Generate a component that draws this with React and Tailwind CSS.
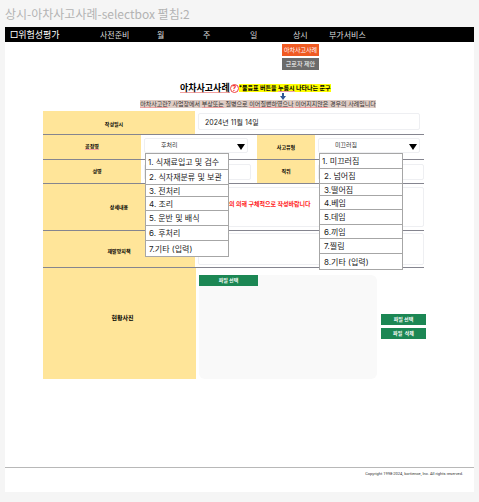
const NAV = [
  { label: "사전준비", col: "col-start-2" },
  { label: "월", col: "col-start-3" },
  { label: "주", col: "col-start-4" },
  { label: "일", col: "col-start-5" },
  { label: "상시", col: "col-start-6" },
  { label: "부가서비스", col: "col-start-7" },
];

const PROCESSES = [
  { label: "1. 식재료입고 및 검수", cls: "h-4 pl-[2px]" },
  { label: "2. 식자재분류 및 보관", cls: "h-[15px] pl-[3px]" },
  { label: "3. 전처리", cls: "h-3 pl-[3px]" },
  { label: "4. 조리", cls: "h-[14px] pl-[3px]" },
  { label: "5. 운반 및 배식", cls: "h-[15px] pl-[3px]" },
  { label: "6. 후처리", cls: "h-[15px] pl-[3px]" },
  { label: "7.기타 (입력)", cls: "h-4 pl-[3px]" },
];

const ACCIDENTS = [
  { label: "1. 미끄러짐", cls: "h-[15px] pl-[2px]" },
  { label: "2. 넘어짐", cls: "h-[15px] pl-1" },
  { label: "3.떨어짐", cls: "h-3 pl-1" },
  { label: "4.베임", cls: "h-[14px] pl-1" },
  { label: "5.데임", cls: "h-[15px] pl-1" },
  { label: "6.끼임", cls: "h-[14px] pl-1" },
  { label: "7.찔림", cls: "h-[15px] pl-1" },
  { label: "8.기타 (입력)", cls: "h-4 pl-1" },
];

const LABEL = "flex items-center justify-center bg-[#ffe599] text-[5px] font-bold leading-none";
const FIELD = "block w-full rounded-[2px] border border-[#eeeff2] bg-white outline-none";
const FILE_BUTTON = "flex items-center justify-center bg-[#1c8754] text-[5px] font-bold leading-none text-white";

function Misspelt({ children }) {
  return <span className="border-b border-[#f2a0a0]">{children}</span>;
}

function OpenSelect({ id, label, value, items }) {
  return (
    <div className="relative pl-[3px] pt-[3px]">
      <select
        id={id}
        defaultValue={value}
        className={`${FIELD} h-[15px] appearance-none pb-[2px] pl-4 text-[6px] leading-none text-[#333]`}
      >
        <option>{value}</option>
        {items.map((item) => (
          <option key={item.label}>{item.label}</option>
        ))}
      </select>
      <svg viewBox="0 0 8 6" className="pointer-events-none absolute right-[3px] top-[9px] h-[6px] w-2">
        <path d="M0 0h8L4 6z" fill="#000" />
      </svg>
      <ul
        role="listbox"
        aria-label={label}
        className="absolute left-1 top-[18px] z-10 w-[84px] border-x border-t border-[#a6a6a6] bg-white text-[8px] leading-none text-[#222]"
      >
        {items.map((item) => (
          <li
            key={item.label}
            role="option"
            aria-selected="false"
            className={`flex items-center whitespace-nowrap border-b border-[#a6a6a6] ${item.cls}`}
          >
            {item.label}
          </li>
        ))}
      </ul>
    </div>
  );
}

export default function App() {
  return (
    <div className="min-h-screen bg-[#f5f5f5] px-[5px] pb-[10px] font-['Inter','Noto_Sans_CJK_KR',sans-serif] text-black">
      <h1 className="flex h-[27px] items-center whitespace-nowrap font-['Noto_Sans_CJK_KR',sans-serif] text-[12px] leading-none text-[#b3b3b3]">
        상시-아차사고사례-selectbox 펼침:2
      </h1>

      <div className="flex min-h-[465px] flex-col bg-white">
        <nav className="grid h-[15px] grid-cols-[95fr_57fr_46fr_47fr_43fr_36fr_145fr] items-center bg-black text-[8px] leading-none text-[#ddd]">
          <a href="#home" className="whitespace-nowrap pl-[5px] text-[9px] text-white">
            □위험성평가
          </a>
          {NAV.map((item) => (
            <a key={item.label} href="#menu" className={`whitespace-nowrap ${item.col}`}>
              {item.label}
            </a>
          ))}
        </nav>

        <div className="grid grid-cols-[277fr_192fr] pt-[2px]">
          <div className="col-start-2 flex w-[37px] flex-col gap-[2px] text-[6px] leading-none text-white">
            <button type="button" className="h-3 whitespace-nowrap bg-[#f05a22]">아차사고사례</button>
            <button type="button" className="h-3 whitespace-nowrap bg-[#6b6b6b]">근로자 제안</button>
          </div>
        </div>

        <main className="ml-[38px] mr-[50px]">
          <header className="grid grid-cols-[137fr_244fr] pt-[13px]">
            <div className="col-start-2 flex items-center whitespace-nowrap leading-none">
              <h2 className="border-b border-[#f2a0a0] text-[9px] font-bold">아차사고사례</h2>
              <button
                type="button"
                aria-label="도움말"
                className="flex size-[9px] items-center justify-center rounded-full border border-[#f04040] text-[7px] font-bold leading-none text-[#f02020]"
              >
                ?
              </button>
              <span className="bg-[#ffff00] text-[6px] font-bold leading-[8px]">
                *물음표 버튼을 <Misspelt>누름시</Misspelt> 나타나는 문구
              </span>
            </div>
          </header>
          <div className="grid grid-cols-[237fr_144fr]">
            <svg viewBox="0 0 6 7" className="col-start-2 h-[7px] w-[6px]">
              <path d="M2 0h2v3h2L3 7 0 3h2z" fill="#2f5597" />
            </svg>
          </div>
          <p className="flex justify-center whitespace-nowrap pb-[3px] pl-[49px] text-[6px] leading-[8px] text-[#333]">
            <span className="bg-[#dfccc4]">
              <Misspelt>아차사고란</Misspelt>? 사업장에서 <Misspelt>부상또는</Misspelt> 질병으로{" "}
              <Misspelt>이어질뻔하였으나</Misspelt> <Misspelt>이어지지않은</Misspelt> 경우의 사례입니다
            </span>
          </p>

          <form>
            <div className="grid h-6 grid-cols-[152fr_229fr] border-b border-[#85858f]">
              <label htmlFor="date" className={`${LABEL} pr-[10px] pt-1`}>작성일시</label>
              <div className="pl-[3px] pr-1 pt-[2px]">
                <input
                  id="date"
                  defaultValue="2024년 11월 14일"
                  className={`${FIELD} h-[17px] pl-[6px] text-[7px] leading-none text-[#222]`}
                />
              </div>
            </div>

            <div className="grid h-[25px] grid-cols-[98fr_107fr_9fr_58fr_105fr_4fr] border-b border-[#85858f]">
              <label htmlFor="process" className={LABEL}>
                <Misspelt>공정명</Misspelt>
              </label>
              <OpenSelect id="process" label="공정명" value="후처리" items={PROCESSES} />
              <label htmlFor="accident" className={`${LABEL} col-start-4`}>사고유형</label>
              <OpenSelect id="accident" label="사고유형" value="미끄러짐" items={ACCIDENTS} />
            </div>

            <div className="grid h-6 grid-cols-[98fr_110fr_6fr_58fr_109fr] border-b border-[#85858f]">
              <label htmlFor="name" className={`${LABEL} pl-[10px]`}>성명</label>
              <div className="pl-[3px] pt-1">
                <input id="name" className={`${FIELD} h-4 text-[6px]`} />
              </div>
              <label htmlFor="position" className={`${LABEL} col-start-4`}>직위</label>
              <div className="pl-[3px] pt-1">
                <input id="position" className={`${FIELD} h-4 text-[6px]`} />
              </div>
            </div>

            <div className="grid h-[47px] grid-cols-[152fr_229fr] border-b border-[#85858f]">
              <label htmlFor="detail" className={LABEL}>상세내용</label>
              <div className="pl-[3px] pt-[3px]">
                <textarea
                  id="detail"
                  defaultValue="육하원칙의 의해 구체적으로 작성바랍니다"
                  className={`${FIELD} h-10 resize-none overflow-hidden pl-2 pt-3 text-[6px] font-bold leading-[8px] text-[#ff1a1a]`}
                />
              </div>
            </div>

            <div className="grid h-[37px] grid-cols-[152fr_229fr] border-b border-[#85858f]">
              <label htmlFor="prevention" className={`${LABEL} pt-1`}>재발방지책</label>
              <div className="pl-[3px] pt-[2px]">
                <textarea id="prevention" className={`${FIELD} h-8 resize-none overflow-hidden text-[6px]`} />
              </div>
            </div>

            <div className="-mr-[2px] grid h-[111px] grid-cols-[153fr_3fr_178fr_4fr_45fr]">
              <div className="flex items-center justify-center bg-[#ffe599] pb-3 pl-[6px] text-[6px] font-bold leading-none">
                현황사진
              </div>
              <div className="col-start-3 mt-[7px] rounded-md bg-[#f9f9f9]">
                <button type="button" className={`${FILE_BUTTON} h-[11px] w-[59px]`}>파일 선택</button>
              </div>
              <div className="col-start-5 flex flex-col gap-[3px] pt-[46px]">
                <button type="button" className={`${FILE_BUTTON} h-[11px]`}>파일 선택</button>
                <button type="button" className={`${FILE_BUTTON} h-[11px]`}>파일&nbsp; 삭제</button>
              </div>
            </div>
          </form>
        </main>

        <footer className="mt-auto h-[25px] border-t border-[#b8b8b8] pr-[11px] pt-[3px] text-right font-['Roboto',sans-serif] text-[4px] leading-[5px] text-[#333]">
          Copyright 1998-2024, kortience, Inc. All rights reserved.
        </footer>
      </div>
    </div>
  );
}
